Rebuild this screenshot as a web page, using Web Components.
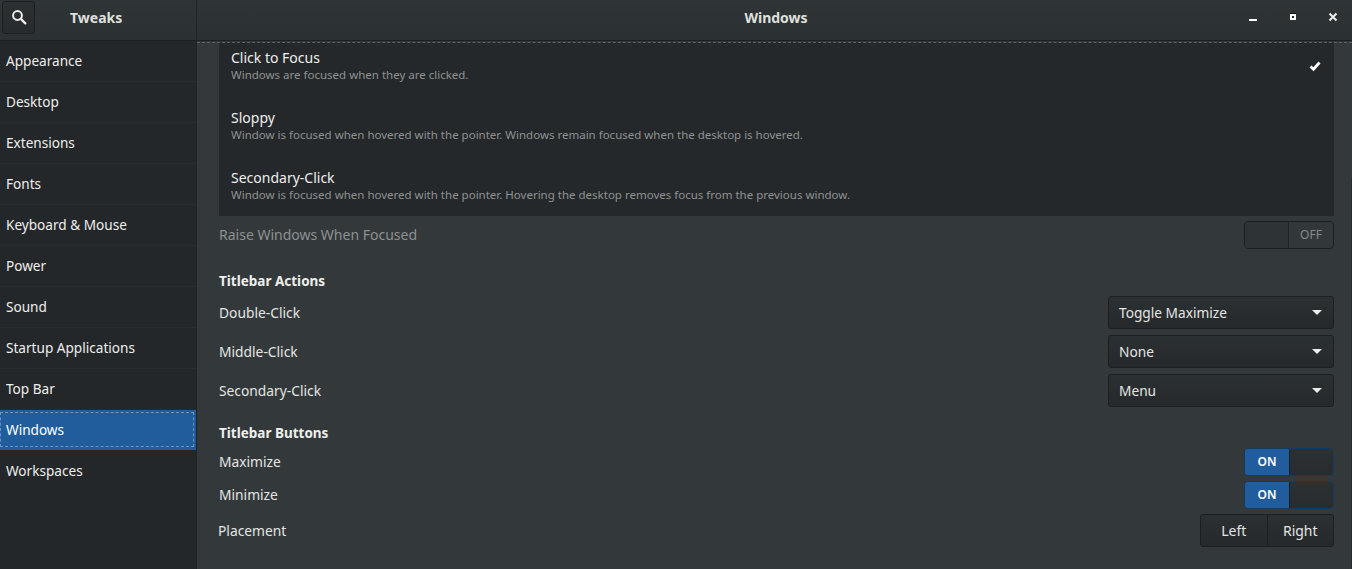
<!doctype html>
<html><head><meta charset="utf-8"><style>
html,body{margin:0;height:100%;background:#33393b;overflow:hidden}
body{font:14px "Noto Sans",sans-serif;color:#eeeeec}
</style></head><body>
<tw-app>
  <tw-header slot="header"></tw-header>
  <tw-sidebar slot="side">
    <tw-side-item>Appearance</tw-side-item><tw-side-item>Desktop</tw-side-item><tw-side-item>Extensions</tw-side-item><tw-side-item>Fonts</tw-side-item><tw-side-item>Keyboard &amp; Mouse</tw-side-item><tw-side-item>Power</tw-side-item><tw-side-item>Sound</tw-side-item><tw-side-item>Startup Applications</tw-side-item><tw-side-item>Top Bar</tw-side-item><tw-side-item selected>Windows</tw-side-item><tw-side-item last>Workspaces</tw-side-item>
  </tw-sidebar>
  <tw-main slot="main">
    <tw-radio-list>
      <tw-radio-row first checked title="Click to Focus" desc="Windows are focused when they are clicked."></tw-radio-row>
      <tw-radio-row title="Sloppy" desc="Window is focused when hovered with the pointer. Windows remain focused when the desktop is hovered."></tw-radio-row>
      <tw-radio-row third title="Secondary-Click" desc="Window is focused when hovered with the pointer. Hovering the desktop removes focus from the previous window."></tw-radio-row>
    </tw-radio-list>
    <tw-row h="37" dim label="Raise Windows When Focused"><tw-switch off dim></tw-switch></tw-row>
    <tw-heading style="height:26px;margin-top:14px">Titlebar Actions</tw-heading>
    <tw-row h="39" label="Double-Click"><tw-combo value="Toggle Maximize"></tw-combo></tw-row>
    <tw-row h="39" label="Middle-Click"><tw-combo value="None"></tw-combo></tw-row>
    <tw-row h="39" label="Secondary-Click"><tw-combo value="Menu"></tw-combo></tw-row>
    <tw-heading style="height:26px;margin-top:9px">Titlebar Buttons</tw-heading>
    <tw-row h="33" label="Maximize"><tw-switch></tw-switch></tw-row>
    <tw-row h="33" label="Minimize"><tw-switch></tw-switch></tw-row>
    <tw-row h="39" label="Placement" style="margin-left:-1px"><tw-segment></tw-segment></tw-row>
  </tw-main>
</tw-app>
<script>
function def(name, css, html, init){
  customElements.define(name, class extends HTMLElement{
    connectedCallback(){
      if(this.shadowRoot) return;
      const r=this.attachShadow({mode:'open'});
      r.innerHTML='<style>'+css+'</style>'+(typeof html==='function'?html(this):html);
      if(init) init(this,r);
    }
  });
}
const attr=(e,n)=>(e.getAttribute(n)||'');
def('tw-app',`:host{display:grid;grid-template-columns:197px 1fr;grid-template-rows:41px 1fr;width:1352px;height:569px;overflow:hidden}
 .h{grid-column:1/3}`,`<div class="h"><slot name="header"></slot></div><slot name="side"></slot><slot name="main"></slot>`);
def('tw-header',`:host{display:grid;grid-template-columns:196px 1px 1fr;height:41px;box-sizing:border-box;border-bottom:1px solid #1b1f20;background:linear-gradient(#2f3436,#2b3032)}
 .l{display:flex;align-items:center;padding:0 0 6px 2px}
 .s{width:33px;height:33px;box-sizing:border-box;border:1px solid #1b1f20;border-radius:3px;background:linear-gradient(#2b3032,#272b2e);display:flex;align-items:center;justify-content:center}
 .t{font-weight:700;font-size:14px;flex:0 0 auto;margin-left:35px;color:#dfe0de}
 .d{background:#1f2325}
 .r{position:relative;display:flex;align-items:center;justify-content:center;font-weight:700;color:#dfe0de;padding:0 0 6px 3px}
 svg.w{position:absolute;right:0;top:0}`,
 `<div class="l"><div class="s"><svg width="16" height="16" viewBox="0 0 16 16"><circle cx="6.5" cy="6.5" r="4.4" fill="none" stroke="#eeeeec" stroke-width="2"/><path d="M10 10l4.3 4.3" stroke="#eeeeec" stroke-width="2.4" stroke-linecap="round"/></svg></div><div class="t">Tweaks</div></div><div class="d"></div>
 <div class="r">Windows
   <svg class="w" width="120" height="40" viewBox="0 0 120 40">
    <rect x="17" y="19" width="8" height="2" fill="#fff"/>
    <rect x="58" y="13" width="6" height="7" fill="#fff"/><rect x="58" y="13" width="6" height="1" fill="#111"/><rect x="60" y="16" width="2" height="2" fill="#22272a"/>
    <path d="M97.500 13.500l7 7M104.500 13.500l-7 7" stroke="#eeeeec" stroke-width="2"/>
   </svg>
 </div>`);
def('tw-sidebar',`:host{display:block;background:#232729;border-right:1px solid #1f2325}`,`<slot></slot>`);
def('tw-side-item',`:host{display:flex;align-items:center;height:41px;box-sizing:border-box;padding-left:6px;border-bottom:1px solid #282c2e;color:#eeeeec;position:relative;padding-bottom:1px;font-size:13.6px}
 :host([last]){border-bottom-color:transparent}
 :host([selected]){background:#215d9c;border-bottom-color:#215d9c;color:#fff;height:40px;margin-bottom:1px}
 .f{display:none;position:absolute;inset:2px 2px 2px 0;border:1px dashed rgba(255,255,255,.35)}
 :host([selected]) .f{display:block}`,`<div class="f"></div><slot></slot>`);
def('tw-main',`:host{display:block;position:relative;padding:1px 18px 0 22px;overflow:hidden;height:528px;box-sizing:border-box}
 .u{position:absolute;left:0;right:0;top:0;height:2px;border-bottom:1px dashed #5b6062;box-sizing:border-box}
 .sb{position:absolute;right:0;top:137px;bottom:0;width:1px;background:#272c2e}`,`<div class="u"></div><div class="sb"></div><slot></slot>`);
def('tw-radio-list',`:host{display:block;background:#24282a}`,`<slot></slot>`);
def('tw-radio-row',`:host{display:flex;align-items:center;height:60px;box-sizing:border-box;padding:0 12px 3px;position:relative}
 :host([first]){height:54px;padding-bottom:9px}
 :host([third]){padding-bottom:2px}
 .t{font-size:14px;line-height:19px;color:#eeeeec}.d{font-size:11.5px;line-height:15px;color:#8f9293}
 .b{flex:1}
 svg{position:absolute;right:12px;top:17px}`,
 e=>`<div class="b"><div class="t">${attr(e,'title')}</div><div class="d">${attr(e,'desc')}</div></div>`+(e.hasAttribute('checked')?`<svg width="14" height="14" viewBox="0 0 14 14"><path d="M2.5 7.500l3 2.700 6-6.700" fill="none" stroke="#fff" stroke-width="2.800"/></svg>`:''));
def('tw-row',`:host{display:flex;align-items:center;justify-content:space-between;height:var(--h,39px)}
 .l{color:#e4e5e3;font-size:13.8px}
 :host([dim]) .l{color:#8d9091;font-size:14px}`,e=>{e.style.setProperty('--h',attr(e,'h')+'px');return `<span class="l">${attr(e,'label')}</span><slot></slot>`});
def('tw-heading',`:host{display:flex;align-items:center;font-weight:700;color:#eeeeec;font-size:13.5px;padding-top:1px;box-sizing:border-box}`,`<slot></slot>`);
def('tw-combo',`:host{display:flex;align-items:center;justify-content:space-between;width:226px;height:33px;box-sizing:border-box;padding:0 11px 0 10px;border:1px solid #1b1f20;border-radius:3px;background:linear-gradient(#2b3032,#25292c);color:#e4e5e3;font-size:13.7px}
 i{width:0;height:0;border:5px solid transparent;border-top:5px solid #eeeeec;border-bottom:0;display:block}`,e=>`<span>${attr(e,'value')}</span><i></i>`);
def('tw-switch',`:host{display:flex;width:90px;height:28px;box-sizing:border-box;border:1px solid #1b1f20;border-radius:4px;overflow:hidden;font-size:12px;font-weight:600}
 .on{flex:0 0 44px;background:#215d9c;color:#fff;display:flex;align-items:center;justify-content:center}
 .k{flex:1;background:linear-gradient(#2b3032,#282c2f);border-left:1px solid #1b1f20}
 .off{flex:0 0 44px;display:flex;align-items:center;justify-content:center;color:#878a8b;font-weight:400;border-left:1px solid #1f2325}
 :host([off]){background:#32383a}
 :host([off]) .k{background:#2e3436;border:0}
 :host(:not([off])){border-color:#123a63}`,
 e=>e.hasAttribute('off')?`<div class="k"></div><div class="off">OFF</div>`:`<div class="on">ON</div><div class="k"></div>`);
def('tw-segment',`:host{display:flex;width:134px;height:33px;box-sizing:border-box;border:1px solid #1b1f20;border-radius:3px;background:linear-gradient(#2b3032,#25292c);color:#e4e5e3}
 span{flex:1;display:flex;align-items:center;justify-content:center}
 span+span{border-left:1px solid #1b1f20}`,`<span>Left</span><span>Right</span>`);
</script></body></html>
